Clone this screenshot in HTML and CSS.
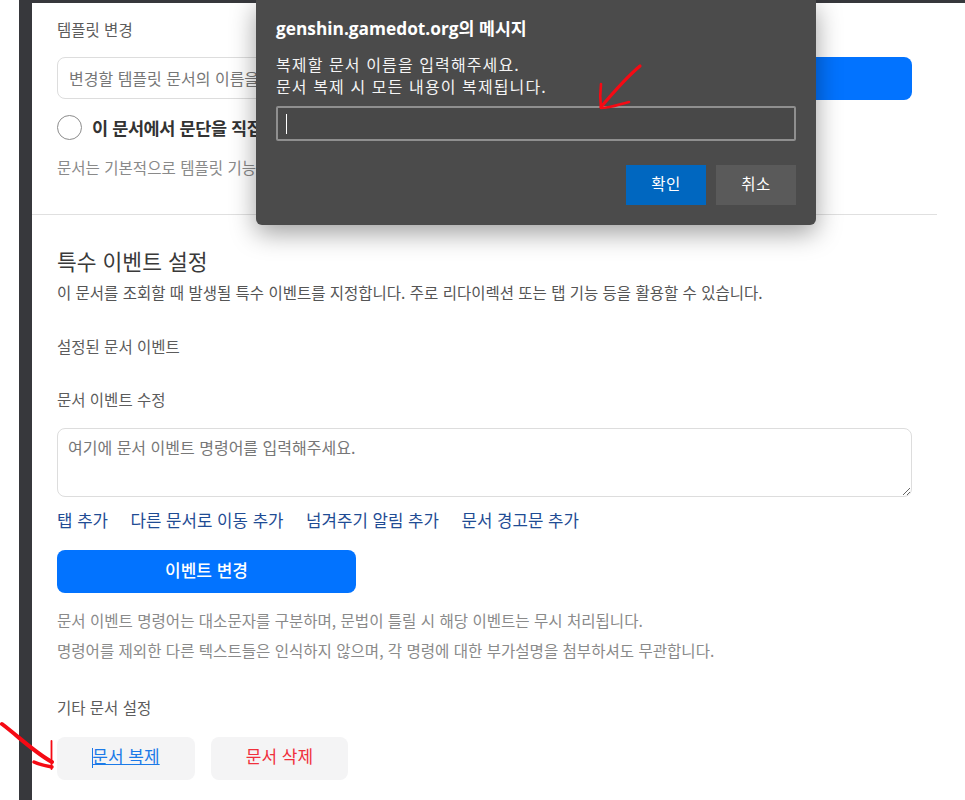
FILE: index.html
```html
<!DOCTYPE html>
<html lang="ko">
<head>
<meta charset="utf-8">
<title>문서 설정</title>
<link rel="stylesheet" href="styles.css">
</head>
<body>
<div class="frame">
  <main class="panel">
    <section class="top-section">
      <div class="label label-first">템플릿 변경</div>
      <div class="input-row">
        <input class="text-input" type="text" placeholder="변경할 템플릿 문서의 이름을 입력해주세요.">
        <button class="primary primary-wide">템플릿 변경</button>
      </div>
      <div class="radio-row"><span class="radio"></span><span class="radio-text">이 문서에서 문단을 직접 편집합니다</span></div>
      <p class="help help-top">문서는 기본적으로 템플릿 기능을 사용합니다.</p>
    </section>
    <section class="event-section">
      <h2 class="heading">특수 이벤트 설정</h2>
      <p class="lead">이 문서를 조회할 때 발생될 특수 이벤트를 지정합니다. 주로 리다이렉션 또는 탭 기능 등을 활용할 수 있습니다.</p>
      <div class="label label-set">설정된 문서 이벤트</div>
      <div class="label label-edit">문서 이벤트 수정</div>
      <textarea class="event-input" placeholder="여기에 문서 이벤트 명령어를 입력해주세요."></textarea>
      <nav class="links">
        <a class="link">탭 추가</a>
        <a class="link">다른 문서로 이동 추가</a>
        <a class="link">넘겨주기 알림 추가</a>
        <a class="link">문서 경고문 추가</a>
      </nav>
      <button class="primary primary-event">이벤트 변경</button>
      <p class="help help-one">문서 이벤트 명령어는 대소문자를 구분하며, 문법이 틀릴 시 해당 이벤트는 무시 처리됩니다.</p>
      <p class="help help-two">명령어를 제외한 다른 텍스트들은 인식하지 않으며, 각 명령에 대한 부가설명을 첨부하셔도 무관합니다.</p>
      <div class="label label-other">기타 문서 설정</div>
      <div class="action-row">
        <button class="action action-copy"><span class="text-caret"></span>문서 복제</button>
        <button class="action action-delete">문서 삭제</button>
      </div>
    </section>
  </main>
</div>

<div class="dialog" role="dialog">
  <div class="dialog-title">genshin.gamedot.org의 메시지</div>
  <div class="dialog-msg">복제할 문서 이름을 입력해주세요.<br>문서 복제 시 모든 내용이 복제됩니다.</div>
  <div class="dialog-input"><span class="dialog-caret"></span></div>
  <div class="dialog-actions">
    <button class="dialog-btn dialog-ok">확인</button>
    <button class="dialog-btn dialog-cancel">취소</button>
  </div>
</div>

<svg class="scribble" width="965" height="800" viewBox="0 0 965 800" fill="none" stroke="#f50a14" stroke-linecap="round" stroke-linejoin="round">
  <path stroke-width="3.2" d="M640 66C628 76 612 94 601 107"/>
  <path stroke-width="2.6" d="M601 84C600 92 600 100 601 108C611 108 620 104 629 102"/>
  <path stroke-width="4" d="M2 724C18 736 34 752 52 762"/>
  <path stroke-width="1.8" d="M51.500 741V769"/>
  <path stroke-width="3.4" d="M34 762C40 765 46 766 52 767"/>
</svg>
</body>
</html>
```

FILE: styles.css
```css
* { box-sizing: border-box; }

html, body {
  margin: 0;
  height: 800px;
  overflow: hidden;
  background: #fff;
}

body {
  position: relative;
  font-family: "Noto Sans CJK KR", "Noto Sans", sans-serif;
  color: #444;
}

.frame {
  margin-left: 19px;
  height: 800px;
  border-top: 3px solid #37383c;
  border-left: 13px solid #37383c;
}

.panel { width: 905px; }

.top-section {
  height: 212px;
  padding: 15px 25px 0;
  border-bottom: 1px solid #e0e0e0;
}

.event-section { padding: 30px 25px 0; }

.label {
  font-size: 15.500px;
  line-height: 22px;
  color: #5c5c5c;
}

.input-row {
  display: flex;
  gap: 12px;
  margin-top: 17px;
  width: 855px;
}

.text-input {
  flex: 1;
  height: 42px;
  padding: 0 11px;
  font: 16px "Noto Sans CJK KR", sans-serif;
  border: 1px solid #ddd;
  border-radius: 8px;
  background: #fff;
}

.text-input::placeholder, .event-input::placeholder { color: #777; opacity: 1; }

.primary {
  padding: 0 0 5px;
  border: 0;
  border-radius: 8px;
  background: #0273ff;
  color: #fff;
  font: 500 17px "Noto Sans CJK KR", sans-serif;
}

.primary-wide { width: 300px; height: 43px; }

.radio-row {
  display: flex;
  align-items: center;
  gap: 10px;
  margin-top: 14px;
  height: 26px;
}

.radio {
  width: 25px;
  height: 25px;
  border: 1px solid #8c8c8c;
  border-radius: 50%;
  flex: none;
}

.radio-text {
  font-size: 17.500px;
  font-weight: 700;
  color: #333;
  letter-spacing: -0.4px;
  white-space: nowrap;
}

.help {
  margin: 0;
  font-size: 15.550px;
  line-height: 22px;
  color: #8a8a8a;
}

.help-top { margin-top: 16px; }

.heading {
  margin: 0;
  font-size: 21.500px;
  line-height: 32px;
  font-weight: 400;
  color: #3a3a3a;
}

.lead {
  margin: 4px 0 0;
  font-size: 15.500px;
  line-height: 22px;
  color: #555;
}

.label-set { margin-top: 32px; }
.label-edit { margin-top: 31px; }

.event-input {
  display: block;
  width: 855px;
  height: 69px;
  margin-top: 18px;
  padding: 6px 10px;
  font: 16px/24px "Noto Sans CJK KR", sans-serif;
  border: 1px solid #ddd;
  border-radius: 8px;
  background: #fff;
}

.links {
  display: flex;
  gap: 22.500px;
  margin-top: 11px;
  height: 24px;
}

.link {
  font-size: 16.800px;
  line-height: 24px;
  color: #1f4c94;
  white-space: nowrap;
}

.primary-event {
  display: block;
  width: 299px;
  height: 43px;
  margin-top: 18px;
}

.help-one { margin-top: 16px; }
.help-two { margin-top: 8px; }
.label-other { margin-top: 35px; }

.action-row {
  display: flex;
  gap: 16px;
  margin-top: 19px;
}

.action {
  width: 138px;
  height: 43px;
  padding: 0 0 6px;
  border: 0;
  border-radius: 8px;
  background: #f4f4f5;
  font: 17px "Noto Sans CJK KR", sans-serif;
}

.action-delete { width: 137px; color: #f0303c; }

.action-copy {
  color: #1b7ae8;
  text-decoration: underline;
}

.text-caret {
  display: inline-block;
  width: 1px;
  height: 20px;
  margin-right: -1px;
  background: #1b7ae8;
  vertical-align: -5px;
}

.dialog {
  position: absolute;
  top: 0;
  left: 256px;
  width: 560px;
  height: 225px;
  padding: 17px 20px 0;
  background: #4b4b4b;
  border-radius: 0 0 6px 6px;
  box-shadow: 0 8px 26px rgba(0, 0, 0, .38);
  color: #fff;
}

.dialog-title {
  font-family: "Open Sans", "Noto Sans CJK KR", sans-serif;
  font-size: 17.300px;
  font-weight: 700;
  line-height: 24px;
}

.dialog-msg {
  margin-top: 12px;
  font-size: 16px;
  line-height: 22px;
  letter-spacing: 1.100px;
  color: #f4f4f4;
}

.dialog-input {
  display: flex;
  align-items: center;
  width: 520px;
  height: 35px;
  margin-top: 9px;
  padding-left: 8px;
  border: 2px solid #8f8f8f;
  border-radius: 2px;
  background: #484848;
}

.dialog-caret {
  width: 1px;
  height: 20px;
  background: #fff;
}

.dialog-actions {
  display: flex;
  justify-content: flex-end;
  gap: 10px;
  margin-top: 24px;
}

.dialog-btn {
  width: 80px;
  height: 40px;
  padding: 0 0 5px;
  border: 0;
  color: #fff;
  font: 15.500px "Noto Sans CJK KR", sans-serif;
  letter-spacing: .5px;
}

.dialog-ok { background: #0067c0; }
.dialog-cancel { background: #5a5a5a; }

.scribble {
  position: absolute;
  top: 0;
  left: 0;
  pointer-events: none;
}
```
